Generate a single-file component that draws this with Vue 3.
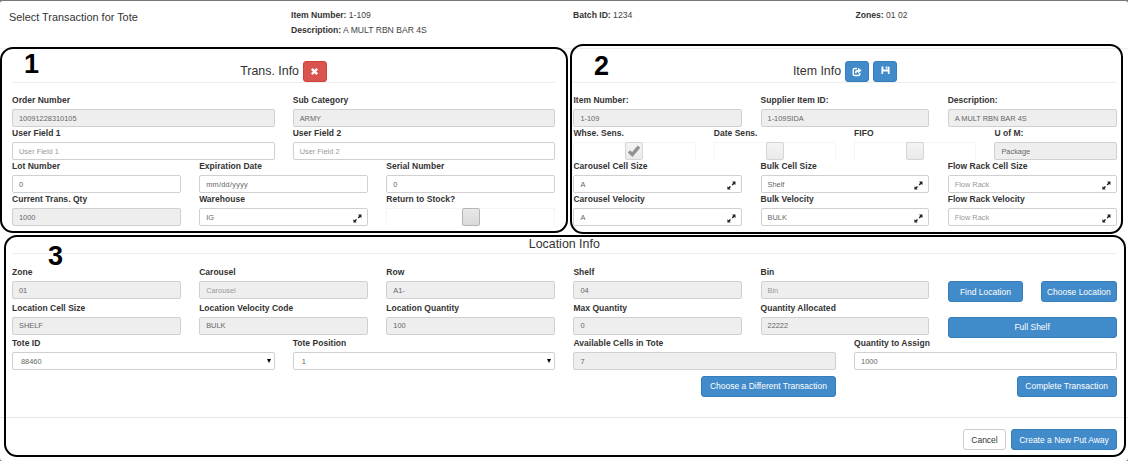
<script setup>
const left = [
  { cols: 2, fields: [
    { label: 'Order Number', value: '10091228310105', off: true },
    { label: 'Sub Category', value: 'ARMY', off: true },
  ] },
  { cols: 2, fields: [
    { label: 'User Field 1', hint: 'User Field 1' },
    { label: 'User Field 2', hint: 'User Field 2' },
  ] },
  { cols: 3, fields: [
    { label: 'Lot Number', value: '0' },
    { label: 'Expiration Date', value: 'mm/dd/yyyy', wide: true },
    { label: 'Serial Number', value: '0' },
  ] },
  { cols: 3, fields: [
    { label: 'Current Trans. Qty', value: '1000', off: true },
    { label: 'Warehouse', value: 'IG', expand: true },
    { label: 'Return to Stock?', check: 'active' },
  ] },
]
const right = [
  { cols: 3, fields: [
    { label: 'Item Number:', value: '1-109', off: true },
    { label: 'Supplier Item ID:', value: '1-109SIDA', off: true },
    { label: 'Description:', value: 'A MULT RBN BAR 4S', off: true },
  ] },
  { cols: 4, fields: [
    { label: 'Whse. Sens.', check: 'ticked' },
    { label: 'Date Sens.', check: 'empty' },
    { label: 'FIFO', check: 'empty' },
    { label: 'U of M:', value: 'Package', off: true },
  ] },
  { cols: 3, fields: [
    { label: 'Carousel Cell Size', value: 'A', expand: true },
    { label: 'Bulk Cell Size', value: 'Shelf', expand: true },
    { label: 'Flow Rack Cell Size', hint: 'Flow Rack', expand: true },
  ] },
  { cols: 3, fields: [
    { label: 'Carousel Velocity', value: 'A', expand: true },
    { label: 'Bulk Velocity', value: 'BULK', expand: true },
    { label: 'Flow Rack Velocity', hint: 'Flow Rack', expand: true },
  ] },
]
const location = [
  { cols: 6, fields: [
    { label: 'Zone', value: '01', off: true },
    { label: 'Carousel', hint: 'Carousel', off: true },
    { label: 'Row', value: 'A1-', off: true },
    { label: 'Shelf', value: '04', off: true },
    { label: 'Bin', hint: 'Bin', off: true },
    { buttons: ['Find Location', 'Choose Location'] },
  ] },
  { cols: 6, fields: [
    { label: 'Location Cell Size', value: 'SHELF', off: true },
    { label: 'Location Velocity Code', value: 'BULK', off: true },
    { label: 'Location Quantity', value: '100', off: true },
    { label: 'Max Quantity', value: '0', off: true },
    { label: 'Quantity Allocated', value: '22222', off: true },
    { buttons: ['Full Shelf'] },
  ] },
  { cols: 4, fields: [
    { label: 'Tote ID', value: '88460', select: true },
    { label: 'Tote Position', value: '1', select: true },
    { label: 'Available Cells in Tote', value: '7', off: true },
    { label: 'Quantity to Assign', value: '1000' },
  ] },
]
const sections = [
  { key: 'trans', rows: left },
  { key: 'item', rows: right },
  { key: 'location', rows: location },
]
</script>

<template>
  <main class="modal">
    <header class="top">
      <h1>Select Transaction for Tote</h1>
      <div class="facts">
        <p><b>Item Number:</b> 1-109</p>
        <p><b>Description:</b> A MULT RBN BAR 4S</p>
      </div>
      <div class="facts"><p><b>Batch ID:</b> 1234</p></div>
      <div class="facts"><p><b>Zones:</b> 01 02</p></div>
    </header>

    <div class="body">
      <section v-for="s in sections" :key="s.key" :class="s.key">
        <h2 v-if="s.key === 'trans'">
          <span>Trans. Info</span>
          <button class="btn icon red">
            <svg viewBox="0 0 10 10" width="9" height="9"><path d="M2 2 8 8M8 2 2 8" stroke="#fff" stroke-width="2.6" /></svg>
          </button>
        </h2>
        <h2 v-else-if="s.key === 'item'">
          <span>Item Info</span>
          <button class="btn icon">
            <svg viewBox="0 0 10 10" width="10" height="10" fill="none" stroke="#fff">
              <path d="M5 1.5H3Q1.2 1.5 1.2 3.3V6.7Q1.2 8.5 3 8.5H6Q7.8 8.5 7.8 6.7V6" stroke-width="1.4" />
              <path d="M3.6 6.2Q3.9 3.6 6.2 3.6" stroke-width="1.6" />
              <path d="M6 .8 9.6 3.6 6 6.4Z" fill="#fff" stroke="none" />
            </svg>
          </button>
          <button class="btn icon save">
            <svg viewBox="0 0 10 10" width="9" height="9" fill="#fff">
              <path d="M.5 .5H2.7V4H7.3V.5H8.6L9.5 1.5V9H7.6V6H2.4V9H.5Z" /><path d="M5.3 .5h1.3v2.5H5.3z" />
            </svg>
          </button>
        </h2>
        <h2 v-else><span>Location Info</span></h2>

        <div v-for="(r, i) in s.rows" :key="i" class="row" :class="'c' + r.cols">
          <div v-for="(f, j) in r.fields" :key="j" class="field">
            <label>{{ f.label }}</label>
            <div v-if="f.buttons" class="actions">
              <button v-for="b in f.buttons" :key="b" class="btn">{{ b }}</button>
            </div>
            <div v-else-if="f.check" class="checkwrap">
              <i class="check" :class="f.check">
                <svg v-if="f.check === 'ticked'" viewBox="0 0 14 14" width="14" height="14"><path d="M2 7.4 5.3 10.6 12 2.6" fill="none" stroke="#929292" stroke-width="3.4" /></svg>
              </i>
            </div>
            <div v-else class="input" :class="{ off: f.off, select: f.select, wide: f.wide }">
              <span :class="{ hint: f.hint }">{{ f.value || f.hint }}</span>
              <svg v-if="f.expand" class="expand" viewBox="0 0 9 9" width="9" height="9" fill="#222">
                <path d="M5 0.5H8.5V4L7.3 2.9 5.7 4.4 4.7 3.4 6.2 1.8Z" /><path d="M.4 5.2 1.5 6.2 3 4.9 4 5.9 2.6 7.4 3.8 8.6H.4Z" />
              </svg>
              <svg v-if="f.select" class="arrow" viewBox="0 0 4 4" width="4" height="4"><path d="M0 0H4L2 4Z" /></svg>
            </div>
          </div>
        </div>
        <div v-if="s.key === 'location'" class="row c4 finish">
          <span></span><span></span>
          <button class="btn">Choose a Different Transaction</button>
          <button class="btn">Complete Transaction</button>
        </div>
      </section>
    </div>

    <footer>
      <button class="btn cancel">Cancel</button>
      <button class="btn create">Create a New Put Away</button>
    </footer>

    <div class="mark m1"><b>1</b></div>
    <div class="mark m2"><b>2</b></div>
    <div class="mark m3"><b>3</b></div>
  </main>
</template>

<style>
body { margin: 0; background: #777; overflow: hidden; }
</style>

<style scoped>
* { box-sizing: border-box; }
.modal {
  position: relative; width: 1128px; height: 461px; background: #fff;
  border-top: 1px solid #777; border-radius: 3px;
  font-family: "Liberation Sans", Arial, sans-serif; font-size: 8.5px; color: #333;
}
.top {
  height: 48px; padding: 7px 11px 0 9px; border-bottom: 1px solid #eee;
  display: grid; grid-template-columns: 282px 282px 282.5px 1fr;
}
h1 { margin: 0; font-size: 10.9px; line-height: 18px; font-weight: 400; }
.facts p { margin: 0; line-height: 15px; font-size: 8.6px; color: #444; }
.facts b { color: #333; }
.body {
  padding: 12px 11.4px 0 12px; height: 368px;
  display: grid; grid-template-columns: 1fr 1fr; column-gap: 18.2px; align-content: start;
}
.location { grid-column: 1 / -1; }
h2 {
  margin: 0 0 12px; height: 21px; font-size: 12.4px; font-weight: 400;
  display: flex; align-items: center; justify-content: center; gap: 4px;
  box-shadow: 0 1px #eee;
}
h2 span { padding-bottom: 2px; }
.location h2 { margin: 9px 0 13px; height: 18px; }
.location h2 span { padding-bottom: 0; }
.row { display: grid; column-gap: 18.2px; height: 33px; }
.location .row { height: 35.5px; }
.c2 { grid-template-columns: repeat(2, minmax(0, 1fr)); }
.c3 { grid-template-columns: repeat(3, minmax(0, 1fr)); }
.c4 { grid-template-columns: repeat(4, minmax(0, 1fr)); }
.c6 { grid-template-columns: repeat(6, minmax(0, 1fr)); }
label { display: block; height: 15px; line-height: 13px; font-weight: 700; font-size: 8.5px; letter-spacing: 0.03px; white-space: nowrap; }
.input {
  height: 18px; padding: 0 6px; display: flex; align-items: center; justify-content: space-between;
  border: 1px solid #d0d0d0; border-radius: 2px; background: #fff;
  font-size: 7.4px; color: #666; white-space: nowrap;
}
.off { background: #eee; }
.hint { color: #999; }
.wide { letter-spacing: 0.25px; }
.select { padding: 0 3px 0 8px; }
.expand { margin-top: 2px; margin-right: -1px; }
.checkwrap { height: 18px; display: flex; justify-content: center; border: 1px solid #f5f5f5; border-bottom: 0; }
.check {
  width: 18px; height: 18px; margin-top: -1px; flex: none; display: flex; align-items: center; justify-content: center;
  border: 1px solid #d5d5d5; border-radius: 2px; background: linear-gradient(#f4f4f4, #eaeaea);
}
.check.active { border-color: #b5b5b5; background: linear-gradient(#e8e8e8, #dadada); }
.btn {
  height: 21px; padding: 0; border: 1px solid #357ebd; border-radius: 3px; background: #428bca; color: #fff;
  font: 8.5px "Liberation Sans", Arial, sans-serif; white-space: nowrap;
}
.icon { width: 24px; display: flex; align-items: center; justify-content: center; }
.save { padding-bottom: 2px; }
.red { background: #d9534f; border-color: #d43f3a; }
.actions { display: flex; gap: 18px; }
.actions .btn { flex: 1; }
.location .finish { height: 21px; margin-top: 3px; }
.finish .btn { justify-self: end; width: 100px; }
.finish .btn:nth-child(3) { width: 135px; }
footer {
  height: 44px; padding: 11px 11px 0; border-top: 1px solid #e5e5e5;
  display: flex; justify-content: flex-end; gap: 5px;
}
.cancel { width: 43px; color: #333; background: #fff; border-color: #ccc; }
.create { width: 106px; }
.mark { position: absolute; border: 2px solid #000; border-radius: 13px; pointer-events: none; }
.mark b { position: absolute; font-size: 27px; line-height: 30px; color: #000; }
.m1 { left: 0; top: 46px; width: 568px; height: 186px; }
.m1 b { left: 22px; top: 0; }
.m2 { left: 570px; top: 43px; width: 553px; height: 190px; }
.m2 b { left: 22px; top: 5px; }
.m3 { left: 4px; top: 234px; width: 1122px; height: 222px; }
.m3 b { left: 42px; top: 4px; }
</style>
